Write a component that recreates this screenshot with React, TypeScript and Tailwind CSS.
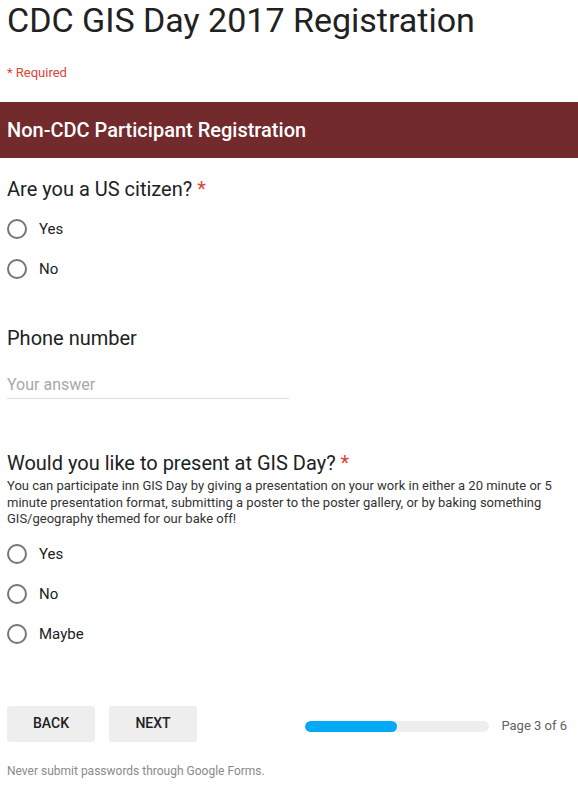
import type { ReactNode } from 'react'

function Radio({ label }: { label: string }) {
  return (
    <div className="h-[40px] flex items-center pl-[7px]">
      <span className="w-[20px] h-[20px] rounded-full border-2 border-[#757575] box-border" />
      <span className="ml-[12px] text-[15px] leading-5 text-[#202124]">{label}</span>
    </div>
  )
}

function Question({ children, required }: { children: ReactNode; required?: boolean }) {
  return (
    <div className="px-[7px] text-[20px] leading-6 text-[#202124]">
      {children}
      {required && <span className="text-[#db4437]"> *</span>}
    </div>
  )
}

export default function App() {
  return (
    <div className="w-[578px] bg-white font-['Roboto',sans-serif]">
      <h1 className="px-[7px] pt-[1px] text-[34px] leading-[38px] text-[#212121]">CDC GIS Day 2017 Registration</h1>
      <div className="px-[7px] mt-[26px] text-[13px] leading-4 text-[#db4437]">* Required</div>

      <div className="mt-[21px] h-[56px] bg-[#722a2d] flex items-center px-[7px]">
        <span className="text-white text-[20px] font-medium">Non-CDC Participant Registration</span>
      </div>

      <div className="mt-[19px]">
        <Question required>Are you a US citizen?</Question>
        <div className="mt-[8px]">
          <Radio label="Yes" />
          <Radio label="No" />
        </div>
      </div>

      <div className="mt-[37px]">
        <Question>Phone number</Question>
        <div className="mt-[25px] mx-[7px] w-[282px] border-b border-[#e0e0e0] pb-[3px]">
          <span className="text-[16px] leading-5 text-[#a8a8a8] block">Your answer</span>
        </div>
      </div>

      <div className="mt-[52px]">
        <Question required>Would you like to present at GIS Day?</Question>
        <p className="mt-[3px] pl-[7px] pr-[16px] text-[13px] leading-[16.5px] text-[#333]">
          You can participate inn GIS Day by giving a presentation on your work in either a 20 minute or 5 minute presentation format, submitting a poster to the poster gallery, or by baking something GIS/geography themed for our bake off!
        </p>
        <div className="mt-[6px]">
          <Radio label="Yes" />
          <Radio label="No" />
          <Radio label="Maybe" />
        </div>
      </div>

      <div className="mt-[52px] flex items-center pl-[7px] pr-[11px]">
        <button className="w-[88px] h-[36px] rounded-[3px] bg-[#eeeeee] text-[14px] font-medium text-[#202124]">BACK</button>
        <button className="ml-[14px] w-[88px] h-[36px] rounded-[3px] bg-[#eeeeee] text-[14px] font-medium text-[#202124]">NEXT</button>
        <div className="ml-auto flex items-center mt-[5px]">
          <div className="w-[184px] h-[11px] rounded-full bg-[#eeeeee] overflow-hidden">
            <div className="w-[92px] h-full rounded-full bg-[#03a9f4]" />
          </div>
          <span className="ml-[12px] text-[13px] text-[#616161]">Page 3 of 6</span>
        </div>
      </div>

      <div className="mt-[21px] px-[7px] pb-[10px] text-[12px] leading-4 text-[#8a8a8a]">Never submit passwords through Google Forms.</div>
    </div>
  )
}
